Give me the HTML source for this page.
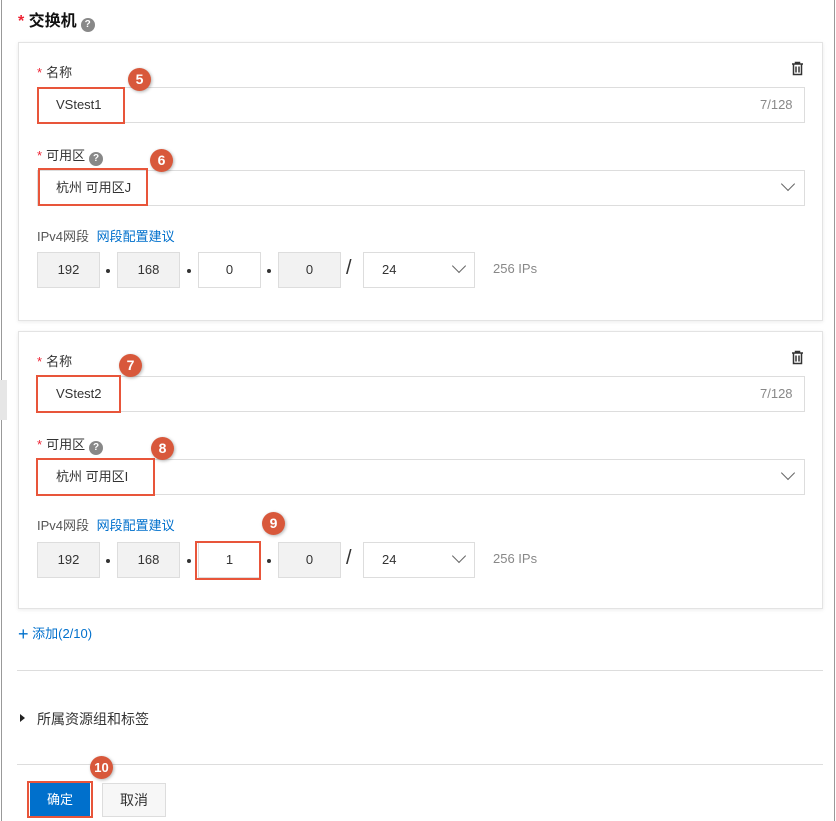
<!DOCTYPE html>
<html><head><meta charset="utf-8"><style>
*{box-sizing:border-box;margin:0;padding:0}
body{width:836px;height:821px;background:#fff;font-family:"Liberation Sans","Noto Sans CJK SC",sans-serif;font-size:13px;color:#333;position:relative;overflow:hidden}
.a{position:absolute}
.frame{left:1px;top:0;width:834px;height:821px;border-left:1px solid #999;border-right:1px solid #999}
.card{left:18px;width:805px;border:1px solid #e3e3e3;box-shadow:0 1px 4px rgba(0,0,0,.08);background:#fff}
.lbl{font-size:13px;color:#333}
.lbl b{color:#e23;font-weight:normal;margin-right:4px}
.inp{border:1px solid #ddd;background:#fff;height:36px;line-height:34px;padding-left:18px;font-size:13px}
.ip{border:1px solid #ddd;background:#f2f2f2;height:36px;line-height:34px;text-align:center;font-size:13px;width:63px}
.dot{width:4px;height:4px;border-radius:50%;background:#333}
.q{display:inline-block;width:14px;height:14px;border-radius:50%;background:#888;color:#fff;font-size:10px;line-height:14px;text-align:center;font-weight:bold;vertical-align:-1px;margin-left:4px}
.red{border:2px solid #e8553a}
.badge{width:23px;height:23px;border-radius:50%;background:#d8583b;color:#fff;font-weight:bold;font-size:14px;text-align:center;line-height:23px;box-shadow:1px 1px 3px rgba(0,0,0,.3)}
.link{color:#0070cc}
.chev{width:10px;height:10px;border-right:1.5px solid #666;border-bottom:1.5px solid #666;transform:rotate(45deg)}
.gray{color:#888}
</style></head><body>
<div class="a frame"></div>
<div class="a" style="left:0;top:380px;width:7px;height:40px;background:#e6e6e6"></div>
<div class="a" style="left:18px;top:7px;font-size:16px;font-weight:bold;color:#111"><span style="color:#e23">*</span> 交换机<span class="q">?</span></div>

<div class="a card" style="top:42px;height:279px"></div>
<div class="a card" style="top:331px;height:278px"></div>

<div class="a lbl" style="left:37px;top:62px"><b>*</b>名称</div>
<svg class="a" style="left:791px;top:61px" width="13" height="15" viewBox="0 0 13 15"><path d="M1 3h11M4.5 3V1.5h4V3M2.5 3.5v10h8v-10M5 5.5v6M8 5.5v6" stroke="#333" stroke-width="1.5" fill="none"/></svg>
<div class="a inp" style="left:37px;top:87px;width:768px">VStest1</div>
<div class="a gray" style="left:760px;top:97px">7/128</div>
<div class="a lbl" style="left:37px;top:145px"><b>*</b>可用区<span class="q">?</span></div>
<div class="a inp" style="left:37px;top:170px;width:768px">杭州 可用区J</div>
<div class="a chev" style="left:783px;top:179px"></div>
<div class="a lbl" style="left:37px;top:226px;color:#555">IPv4网段 <span class="link" style="margin-left:4px">网段配置建议</span></div>
<div class="a ip" style="left:37px;top:252px">192</div>
<div class="a dot" style="left:106px;top:269px"></div>
<div class="a ip" style="left:117px;top:252px">168</div>
<div class="a dot" style="left:187px;top:269px"></div>
<div class="a ip" style="left:198px;top:252px;background:#fff">0</div>
<div class="a dot" style="left:267px;top:269px"></div>
<div class="a ip" style="left:278px;top:252px">0</div>
<div class="a" style="left:346px;top:257px;font-size:20px">/</div>
<div class="a inp" style="left:363px;top:252px;width:112px">24</div>
<div class="a chev" style="left:454px;top:261px"></div>
<div class="a gray" style="left:493px;top:261px">256 IPs</div>

<div class="a lbl" style="left:37px;top:351px"><b>*</b>名称</div>
<svg class="a" style="left:791px;top:350px" width="13" height="15" viewBox="0 0 13 15"><path d="M1 3h11M4.5 3V1.5h4V3M2.5 3.5v10h8v-10M5 5.5v6M8 5.5v6" stroke="#333" stroke-width="1.5" fill="none"/></svg>
<div class="a inp" style="left:37px;top:376px;width:768px">VStest2</div>
<div class="a gray" style="left:760px;top:386px">7/128</div>
<div class="a lbl" style="left:37px;top:434px"><b>*</b>可用区<span class="q">?</span></div>
<div class="a inp" style="left:37px;top:459px;width:768px">杭州 可用区I</div>
<div class="a chev" style="left:783px;top:468px"></div>
<div class="a lbl" style="left:37px;top:515px;color:#555">IPv4网段 <span class="link" style="margin-left:4px">网段配置建议</span></div>
<div class="a ip" style="left:37px;top:542px">192</div>
<div class="a dot" style="left:106px;top:559px"></div>
<div class="a ip" style="left:117px;top:542px">168</div>
<div class="a dot" style="left:187px;top:559px"></div>
<div class="a ip" style="left:198px;top:542px;background:#fff">1</div>
<div class="a dot" style="left:267px;top:559px"></div>
<div class="a ip" style="left:278px;top:542px">0</div>
<div class="a" style="left:346px;top:547px;font-size:20px">/</div>
<div class="a inp" style="left:363px;top:542px;width:112px">24</div>
<div class="a chev" style="left:454px;top:551px"></div>
<div class="a gray" style="left:493px;top:551px">256 IPs</div>

<div class="a link" style="left:18px;top:623px;font-size:13px"><span style="font-size:18px;vertical-align:-2px">+</span> 添加(2/10)</div>
<div class="a" style="left:17px;top:670px;width:806px;height:1px;background:#ddd"></div>
<div class="a" style="left:20px;top:714px;width:0;height:0;border-left:5px solid #222;border-top:4px solid transparent;border-bottom:4px solid transparent"></div>
<div class="a" style="left:37px;top:709px;font-size:14px">所属资源组和标签</div>
<div class="a" style="left:17px;top:764px;width:806px;height:1px;background:#ddd"></div>
<div class="a" style="left:30px;top:783px;width:60px;height:34px;background:#0070cc;color:#fff;text-align:center;line-height:34px">确定</div>
<div class="a" style="left:102px;top:783px;width:64px;height:34px;background:#f7f7f7;border:1px solid #ddd;text-align:center;line-height:32px;font-size:14px">取消</div>

<div class="a red" style="left:37px;top:87px;width:88px;height:37px"></div>
<div class="a red" style="left:38px;top:168px;width:110px;height:38px"></div>
<div class="a red" style="left:36px;top:375px;width:85px;height:38px"></div>
<div class="a red" style="left:36px;top:458px;width:119px;height:38px"></div>
<div class="a red" style="left:195px;top:541px;width:66px;height:39px"></div>
<div class="a red" style="left:27px;top:781px;width:66px;height:37px"></div>
<div class="a badge" style="left:128px;top:68px">5</div>
<div class="a badge" style="left:150px;top:149px">6</div>
<div class="a badge" style="left:119px;top:354px">7</div>
<div class="a badge" style="left:151px;top:437px">8</div>
<div class="a badge" style="left:262px;top:512px">9</div>
<div class="a badge" style="left:90px;top:756px;font-size:13px">10</div>
</body></html>
